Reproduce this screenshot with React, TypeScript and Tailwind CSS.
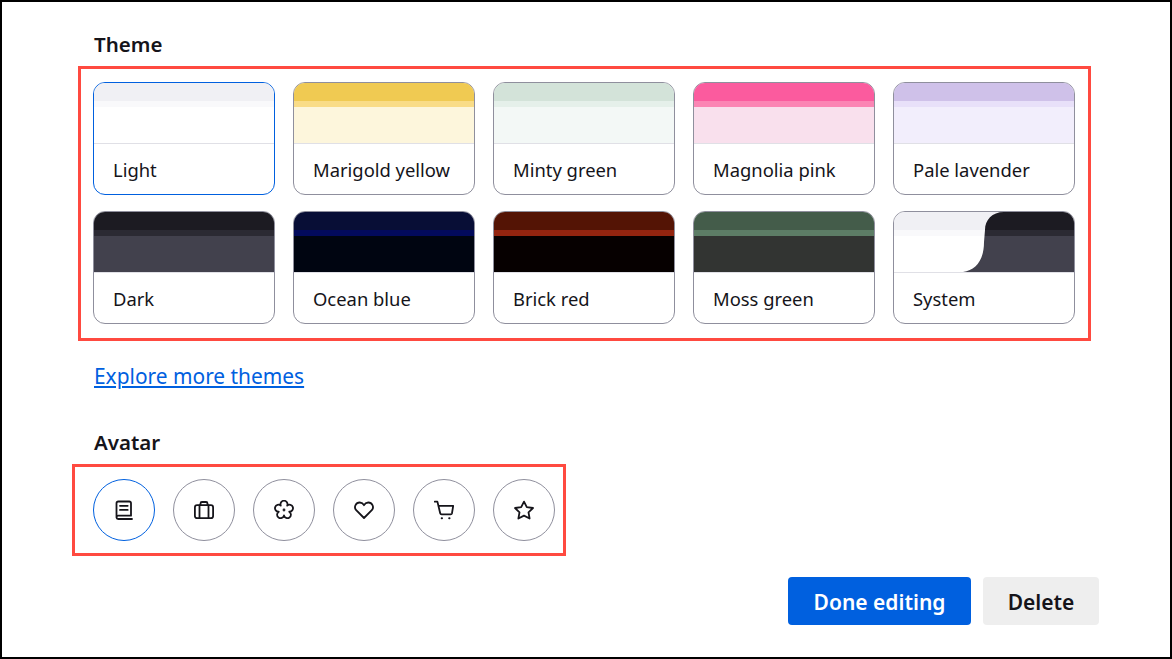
const font = "font-['Noto_Sans','Open_Sans',sans-serif]";

const themes = [
  { name: 'Light', top: 'bg-[#f0f0f4]', mid: 'bg-[#f9f9fb]', body: 'bg-white', active: true },
  { name: 'Marigold yellow', top: 'bg-[#f0ca52]', mid: 'bg-[#f9dc87]', body: 'bg-[#fdf6dc]' },
  { name: 'Minty green', top: 'bg-[#d3e3d9]', mid: 'bg-[#e5f0ea]', body: 'bg-[#f3f8f6]' },
  { name: 'Magnolia pink', top: 'bg-[#fb5b9e]', mid: 'bg-[#fb85b4]', body: 'bg-[#f9e0ed]' },
  { name: 'Pale lavender', top: 'bg-[#cfc1e9]', mid: 'bg-[#e8e0f9]', body: 'bg-[#f2eefc]' },
  { name: 'Dark', top: 'bg-[#1c1b22]', mid: 'bg-[#2b2a33]', body: 'bg-[#42414d]' },
  { name: 'Ocean blue', top: 'bg-[#080e36]', mid: 'bg-[#020a5c]', body: 'bg-[#000511]' },
  { name: 'Brick red', top: 'bg-[#541405]', mid: 'bg-[#93240f]', body: 'bg-[#060000]' },
  { name: 'Moss green', top: 'bg-[#445c4a]', mid: 'bg-[#5d7d66]', body: 'bg-[#323432]' },
];

function SystemPreview() {
  return (
    <svg width="180" height="60" viewBox="0 0 180 60" className="block">
      <defs>
        <clipPath id="dark-side">
          <path d="M69 60C82 58 90 48 90 30L91 18C91 8 98 0 110 0H180V60Z" />
        </clipPath>
      </defs>
      <rect width="180" height="18" fill="#f0f0f4" />
      <rect y="18" width="180" height="6" fill="#f9f9fb" />
      <rect y="24" width="180" height="36" fill="#fff" />
      <g clipPath="url(#dark-side)">
        <rect width="180" height="18" fill="#1c1b22" />
        <rect y="18" width="180" height="6" fill="#2b2a33" />
        <rect y="24" width="180" height="36" fill="#42414d" />
      </g>
    </svg>
  );
}

function ThemeCard({ name, top, mid, body, active }: { name: string; top?: string; mid?: string; body?: string; active?: boolean }) {
  return (
    <div className={`h-[113px] rounded-xl border overflow-hidden bg-white ${active ? 'border-[#0060df]' : 'border-[#8f8f9d]'}`}>
      {name === 'System' ? (
        <SystemPreview />
      ) : (
        <div className="h-[60px] flex flex-col">
          <div className={`h-[18px] ${top}`} />
          <div className={`h-[6px] ${mid}`} />
          <div className={`flex-1 ${body}`} />
        </div>
      )}
      <div className="h-[51px] border-t border-[#e0e0e6] pl-[19px] pt-0.5 flex items-center text-[18.4px] text-[#15141a]">{name}</div>
    </div>
  );
}

const iconProps = {
  width: 20,
  height: 20,
  viewBox: '0 0 20 20',
  fill: 'none',
  stroke: '#15141a',
  strokeWidth: 1.8,
  strokeLinecap: 'round' as const,
  strokeLinejoin: 'round' as const,
};

const avatars = [
  <svg {...iconProps}>
    <path d="M2.5 17.4V3.2A1.7 1.7 0 0 1 4.2 1.5H15.3A1.7 1.7 0 0 1 17 3.2V15.7H4.2A1.7 1.7 0 0 0 2.5 17.4A1.7 1.7 0 0 0 4.2 19H18" />
    <path d="M6 5.8H13.7M6 9.9H13.7" />
  </svg>,
  <svg {...iconProps}>
    <rect x="0.9" y="5.2" width="18.2" height="13" rx="2.2" />
    <path d="M6.5 5V3.5A1.5 1.5 0 0 1 8 2H12A1.5 1.5 0 0 1 13.5 3.5V5M5.5 5.5V18M14.5 5.5V18" />
  </svg>,
  <svg {...iconProps}>
    <path d="M6.77 5.55A3.5 3.5 0 1 1 13.23 5.55A3.5 3.5 0 1 1 15.23 11.7A3.5 3.5 0 1 1 10 15.5A3.5 3.5 0 1 1 4.77 11.7A3.5 3.5 0 1 1 6.77 5.55Z" />
    <circle cx="10" cy="10" r="0.5" fill="#15141a" />
  </svg>,
  <svg {...iconProps}>
    <path d="M10 18L2.2 10.2C-0.6 6.8 2 2.4 5.8 2.5C7.7 2.6 9.2 3.7 10 5.2C10.8 3.7 12.3 2.6 14.2 2.5C18 2.4 20.6 6.8 17.8 10.2Z" />
  </svg>,
  <svg {...iconProps}>
    <path d="M0.7 1.6H3.4L6.2 13.2A1.4 1.4 0 0 0 7.6 14.3H16.6A1.4 1.4 0 0 0 18 13.2L19.2 5.8H4.5" />
    <path d="M7.7 18.2H8M15.2 18.2H15.5" strokeWidth="2" />
  </svg>,
  <svg {...iconProps}>
    <path d="M10 1.6L12.8 7.1L19 8L14.5 12.3L15.6 18.5L10 15.6L4.4 18.5L5.5 12.3L1 8L7.2 7.1Z" />
  </svg>,
];

export default function App() {
  return (
    <div className={`${font} w-[1172px] h-[659px] border-2 border-black bg-white text-[#15141a] flex flex-col overflow-hidden`}>
      <h2 className="mt-[30px] ml-[92px] h-6 leading-6 text-[20.5px] font-semibold">Theme</h2>

      <div className="mt-[10px] ml-[76px] w-[1013px] border-[3px] border-[#ff4a40] pt-[13px] pr-[13px] pb-[14px] pl-3 grid grid-cols-5 gap-x-[18px] gap-y-4">
        {themes.map((t) => (
          <ThemeCard key={t.name} {...t} />
        ))}
        <ThemeCard name="System" />
      </div>

      <a href="#" className="mt-[23px] ml-[92px] h-6 leading-6 text-[20.9px] text-[#0060df] underline">
        Explore more themes
      </a>

      <h2 className="mt-[42px] ml-[92px] h-6 leading-6 text-[20.5px] font-semibold">Avatar</h2>

      <div className="mt-[10px] ml-[70px] w-[494px] border-[3px] border-[#ff4a40] py-3 pl-[18px] flex gap-[18px]">
        {avatars.map((icon, i) => (
          <button
            key={i}
            className={`w-[62px] h-[62px] rounded-full border flex items-center justify-center ${i === 0 ? 'border-[#0060df]' : 'border-[#8f8f9d]'}`}
          >
            {icon}
          </button>
        ))}
      </div>

      <div className="mt-[21px] pr-[71px] flex justify-end gap-3">
        <button className="w-[183px] h-12 pt-1 rounded bg-[#0060df] text-white text-[21px] font-semibold">Done editing</button>
        <button className="w-[116px] h-12 pt-1 rounded bg-[#eeeeee] text-[21px] font-semibold">Delete</button>
      </div>
    </div>
  );
}
